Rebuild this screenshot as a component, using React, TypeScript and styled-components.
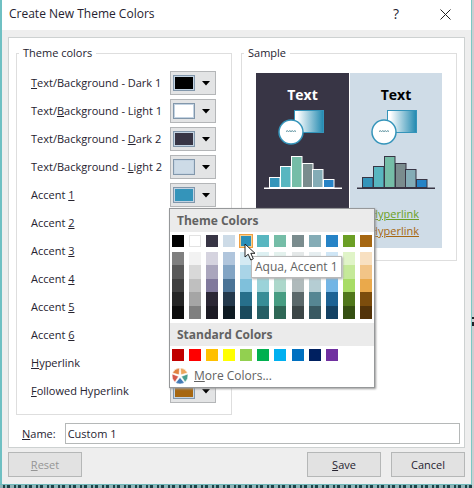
import React from "react";
import styled, { createGlobalStyle } from "styled-components";

const GlobalStyle = createGlobalStyle`
  * { box-sizing: border-box; }
  body {
    margin: 0;
    background: #cfcdd1;
    color: #262330;
    font: 11px/16px "Open Sans", "Noto Sans", sans-serif;
  }
  button, input { font: inherit; color: inherit; }
`;

const Desktop = styled.div`
  position: relative;
  min-height: 100vh;
  padding-right: 2px;
  display: flex;
  flex-direction: column;
  overflow: hidden;
`;

const Dialog = styled.section`
  border-left: 2px solid #6fc0c3;
  border-right: 1px solid #7cc8c4;
  background: #eeeeee;
`;

const DocumentEdge = styled.div`
  flex: 1;
  min-height: 3px;
  border-top: 1px solid #6fb9bb;
  background: repeating-linear-gradient(90deg, #8db4b7 0 3px, #1c4247 3px 5px, #86adb0 5px 7px, #1c4247 7px 10px, #8db4b7 10px 11px);
`;

const DocumentMark = styled.div`
  position: absolute;
  right: 0;
  top: 317px;
  width: 2px;
  height: 9px;
  border-top: 2px solid #242026;
  border-bottom: 4px solid #242026;
`;

const TitleBar = styled.header`
  height: 30px;
  padding: 0 20px 2px 7px;
  display: flex;
  align-items: center;
  background: #fff;
`;

const Title = styled.h1`
  flex: 1;
  margin: 0;
  font-size: 12px;
  line-height: 20px;
  font-weight: 400;
`;

const CaptionButton = styled.button`
  display: grid;
  place-items: center;
  width: 12px;
  height: 20px;
  margin-left: 37px;
  padding: 0;
  border: 0;
  background: none;
  font-size: 14px;
`;

const Panel = styled.div`
  margin: 7px 6px 4px;
  padding: 7px 7px 3px;
  border: 1px solid #cdd1d1;
  background: #fff;
`;

const Groups = styled.div`
  display: grid;
  grid-template-columns: 1fr 1fr;
  gap: 9px;
  align-items: start;
`;

const Group = styled.fieldset`
  min-width: 0;
  margin: 0;
  border: 1px solid #dedede;
  padding: 8px 15px 9px 14px;
`;

const Legend = styled.legend`
  margin-left: -12px;
  padding: 0 4px;
`;

const ColorRow = styled.div`
  display: flex;
  align-items: center;
  justify-content: space-between;
  height: 28px;
  white-space: nowrap;
`;

const PickerAnchor = styled.div`
  position: relative;
  height: 24px;
`;

const DropButton = styled.button`
  display: flex;
  align-items: center;
  justify-content: space-between;
  width: 46px;
  height: 24px;
  padding: 0 5px 0 2px;
  border: 1px solid #b4b6b8;
  background: #e3e4e5;
`;

const Chip = styled.span<{ $color: string }>`
  width: 22px;
  height: 16px;
  border: 1px solid #8297ab;
  padding: 1px;
  background: ${(p) => p.$color} content-box;
  box-shadow: inset 0 0 0 1px #c3d3e2;
`;

const Popup = styled.div`
  position: absolute;
  z-index: 2;
  left: -1px;
  top: 25px;
  width: 206px;
  border: 1px solid #96989a;
  background: #fff;
  box-shadow: 1px 1px 2px #9b9b9b;
  color: #626262;
`;

const PopupHeading = styled.h2`
  margin: 0;
  padding: 2px 7px 1px;
  background: #ebebeb;
  font-size: 12px;
  line-height: 20px;
  font-weight: 700;
`;

const SwatchRow = styled.div`
  display: grid;
  grid-template-columns: repeat(12, 12px);
  justify-content: space-between;
  padding: 3px 2px;
`;

const Swatch = styled.button<{ $color: string; $outlined?: boolean; $selected?: boolean }>`
  width: 12px;
  height: 12px;
  padding: 0;
  border: ${(p) => (p.$outlined ? "1px solid #e2e2e2" : "0")};
  background: ${(p) => p.$color};
  outline: ${(p) => (p.$selected ? "1px solid #f0a040" : "none")};
  box-shadow: ${(p) => (p.$selected ? "inset 0 0 0 1px #f6cf92" : "none")};
`;

const ShadeGrid = styled(SwatchRow)`
  padding: 2px 2px 4px;
`;

const ShadeColumn = styled.div`
  display: flex;
  flex-direction: column;
  height: 67px;
`;

const Shade = styled.button<{ $color: string }>`
  flex: 1;
  padding: 0;
  border: 0;
  background: ${(p) => p.$color};
`;

const MoreColors = styled.button`
  display: flex;
  align-items: center;
  gap: 6px;
  height: 23px;
  padding: 0 2px;
  border: 0;
  background: none;
  font-size: 12px;
`;

const Tooltip = styled.div`
  position: absolute;
  z-index: 3;
  left: 81px;
  top: 47px;
  padding: 0 3px;
  border: 1px solid #b9b9b9;
  background: #fff;
  box-shadow: 1px 1px 2px #aaa;
  font-size: 12px;
  line-height: 20px;
  white-space: nowrap;
`;

const Pointer = styled.svg`
  position: absolute;
  z-index: 4;
  left: 74px;
  top: 34px;
`;

const Preview = styled.div`
  display: grid;
  grid-template-columns: 1fr 1fr;
  height: 175px;
  margin: 4px -1px 3px 0;
`;

const Slide = styled.div<{ $dark?: boolean }>`
  display: flex;
  flex-direction: column;
  align-items: center;
  padding-top: 12px;
  background: ${(p) => (p.$dark ? "#383545" : "#cfdce7")};
  color: ${(p) => (p.$dark ? "#fff" : "#000")};
  border-left: ${(p) => (p.$dark ? "0" : "1px solid #fff")};
`;

const SlideTitle = styled.strong`
  font-size: 14px;
  line-height: 20px;
`;

const Drawing = styled.svg`
  display: block;
  flex: none;
  margin: 3px 0 15px;
`;

const SlideLink = styled.a<{ $color: string }>`
  align-self: flex-end;
  margin-right: 23px;
  line-height: 17px;
  color: ${(p) => p.$color};
`;

const NameRow = styled.div`
  display: flex;
  align-items: center;
  gap: 9px;
  margin: 8px -3px 0 6px;
`;

const NameInput = styled.input`
  flex: 1;
  min-width: 0;
  height: 21px;
  padding: 0 2px;
  border: 1px solid #b5b8b8;
  background: #fff;
`;

const Footer = styled.footer`
  display: flex;
  gap: 10px;
  padding: 0 6px 7px;
`;

const ActionButton = styled.button`
  width: 74px;
  height: 25px;
  padding: 0;
  border: 1px solid #b5b7b7;
  background: #e2e2e2;
  &:disabled { margin-right: auto; color: #959595; }
`;

type Entry = { pre?: string; key: string; post?: string; color: string };

const entries: Entry[] = [
  { key: "T", post: "ext/Background - Dark 1", color: "#000000" },
  { pre: "Text/", key: "B", post: "ackground - Light 1", color: "#ffffff" },
  { pre: "Text/Background - ", key: "D", post: "ark 2", color: "#383545" },
  { pre: "Text/Background - ", key: "L", post: "ight 2", color: "#cddbe7" },
  { pre: "Accent ", key: "1", color: "#3494ba" },
  { pre: "Accent ", key: "2", color: "#58b6c0" },
  { pre: "Accent ", key: "3", color: "#75bda7" },
  { pre: "Accent ", key: "4", color: "#7a8c8e" },
  { pre: "Accent ", key: "5", color: "#84acb6" },
  { pre: "Accent ", key: "6", color: "#2683c6" },
  { key: "H", post: "yperlink", color: "#6b9f25" },
  { key: "F", post: "ollowed Hyperlink", color: "#a66712" },
];

const themeColors = [
  "#000000", "#ffffff", "#383545", "#cddbe7", "#2c8fb9", "#58b6c0",
  "#75bda7", "#7a8c8e", "#84acb6", "#2683c6", "#6b9f25", "#a66712",
];

const shades = [
  ["#7f7f7f", "#595959", "#404040", "#262626", "#0d0d0d"],
  ["#f2f2f2", "#d8d8d8", "#bfbfbf", "#a5a5a5", "#7f7f7f"],
  ["#d5d3df", "#aaa6bd", "#80799c", "#2b2735", "#1c1a24"],
  ["#b0c5dc", "#82a4c4", "#4a7396", "#24394c", "#0e1a22"],
  ["#d4eaf3", "#a9d4e7", "#7fc0db", "#276f8b", "#1a4a5d"],
  ["#ddf0f2", "#bce1e5", "#9bd3d9", "#388d96", "#255e64"],
  ["#e3f1ed", "#c7e4dc", "#acd7ca", "#479d82", "#2f6856"],
  ["#e4e8e8", "#c9d1d2", "#afbabb", "#5b696b", "#3c4647"],
  ["#e6eef0", "#cddde1", "#b5cdd3", "#568693", "#395962"],
  ["#cfe6f6", "#a0cdef", "#72b5e5", "#1c6294", "#134163"],
  ["#e0f4c8", "#c5e999", "#a8dc65", "#50771b", "#354f12"],
  ["#f8e0c1", "#f2c487", "#eaa94b", "#7c4d0d", "#533309"],
];

const standardColors = [
  "#c00000", "#ff0000", "#ffc000", "#ffff00", "#92d050",
  "#00b050", "#00b0f0", "#0070c0", "#002060", "#7030a0",
];

const bars = [
  { x: 6, top: 22, color: "#3494ba" },
  { x: 17, top: 11, color: "#58b6c0" },
  { x: 28, top: 1, color: "#75bda7" },
  { x: 39, top: 8, color: "#7a8c8e" },
  { x: 49, top: 14, color: "#84acb6" },
  { x: 60, top: 24, color: "#2683c6" },
];

function Artwork({ id, stroke }: { id: string; stroke: string }) {
  return (
    <Drawing width="78" height="82" viewBox="0 0 78 82" aria-hidden="true">
      <defs>
        <linearGradient id={id}>
          <stop offset="0.1" stopColor="#fff" />
          <stop offset="1" stopColor="#2189b0" />
        </linearGradient>
      </defs>
      <rect x="30.5" y="2.5" width="29" height="22" fill={`url(#${id})`} stroke="#3494ba" />
      <circle cx="27" cy="24" r="12" fill="#fff" stroke="#3494ba" strokeWidth="1.5" />
      <path d="M22 23.5q1.300-1.500 2.500 0q1.300-1.500 2.500 0q1.300-1.500 2.500 0q1.300-1.500 2.500 0" fill="none" stroke="#4f8997" />
      <g transform="translate(0 47)" stroke={stroke}>
        {bars.map((b) => (
          <rect key={b.x} x={b.x - 0.5} y={b.top + 0.5} width="10.500" height={32 - b.top} fill={b.color} />
        ))}
        <path d="M0 33.200H78" strokeWidth="1.600" />
      </g>
    </Drawing>
  );
}

const wheel = [
  { color: "#eda55c", angle: 36 },
  { color: "#4a9e8f", angle: 108 },
  { color: "#4279b5", angle: 180 },
  { color: "#d45a4c", angle: 252 },
  { color: "#e0813f", angle: 324 },
];

function ColorWheel() {
  return (
    <svg width="16" height="16" viewBox="-8 -8 16 16" aria-hidden="true">
      {wheel.map((w) => (
        <path
          key={w.angle}
          d="M0-1.500L-4.300-6.800Q0-9.200 4.300-6.800Z"
          fill={w.color}
          stroke="#fff"
          strokeWidth="0.500"
          transform={`rotate(${w.angle})`}
        />
      ))}
    </svg>
  );
}

function ColorPopup() {
  return (
    <Popup>
      <PopupHeading>Theme Colors</PopupHeading>
      <SwatchRow>
        {themeColors.map((c, i) => (
          <Swatch key={c} $color={c} $outlined={i === 1} $selected={i === 4} aria-label={c} />
        ))}
      </SwatchRow>
      <ShadeGrid>
        {shades.map((column) => (
          <ShadeColumn key={column[0]}>
            {column.map((c) => <Shade key={c} $color={c} aria-label={c} />)}
          </ShadeColumn>
        ))}
      </ShadeGrid>
      <PopupHeading>Standard Colors</PopupHeading>
      <SwatchRow>
        {standardColors.map((c) => <Swatch key={c} $color={c} aria-label={c} />)}
      </SwatchRow>
      <MoreColors>
        <ColorWheel />
        <span><u>M</u>ore Colors...</span>
      </MoreColors>
      <Tooltip role="tooltip">Aqua, Accent 1</Tooltip>
      <Pointer width="13" height="19" viewBox="0 0 13 19" aria-hidden="true">
        <path d="M1 1V14L4.200 11.200L6.800 17L9.300 15.800L6.800 10.300H11Z" fill="#fff" stroke="#222" />
      </Pointer>
    </Popup>
  );
}

export default function App() {
  return (
    <Desktop>
      <GlobalStyle />
      <Dialog role="dialog" aria-labelledby="dialog-title">
        <TitleBar>
          <Title id="dialog-title">Create New Theme Colors</Title>
          <CaptionButton aria-label="Help">?</CaptionButton>
          <CaptionButton aria-label="Close">
            <svg width="11" height="11" viewBox="0 0 11 11" aria-hidden="true">
              <path d="M0.500 0.500L10.500 10.500M10.500 0.500L0.500 10.500" stroke="#222" />
            </svg>
          </CaptionButton>
        </TitleBar>
        <Panel>
          <Groups>
            <Group>
              <Legend>Theme colors</Legend>
              {entries.map((e, i) => (
                <ColorRow key={i}>
                  <label htmlFor={`color-${i}`}>{e.pre}<u>{e.key}</u>{e.post}</label>
                  <PickerAnchor>
                    <DropButton id={`color-${i}`} aria-haspopup="true">
                      <Chip $color={e.color} />
                      <svg width="8" height="5" viewBox="0 0 8 5" aria-hidden="true">
                        <path d="M0 0H8L4 4.500Z" fill="#000" />
                      </svg>
                    </DropButton>
                    {i === 4 && <ColorPopup />}
                  </PickerAnchor>
                </ColorRow>
              ))}
            </Group>
            <Group>
              <Legend>Sample</Legend>
              <Preview>
                <Slide $dark>
                  <SlideTitle>Text</SlideTitle>
                  <Artwork id="fill-dark" stroke="#ffffff" />
                </Slide>
                <Slide>
                  <SlideTitle>Text</SlideTitle>
                  <Artwork id="fill-light" stroke="#383545" />
                  <SlideLink href="#" $color="#6b9f25">Hyperlink</SlideLink>
                  <SlideLink href="#" $color="#a66712">Hyperlink</SlideLink>
                </Slide>
              </Preview>
            </Group>
          </Groups>
          <NameRow>
            <label htmlFor="theme-name"><u>N</u>ame:</label>
            <NameInput id="theme-name" defaultValue="Custom 1" />
          </NameRow>
        </Panel>
        <Footer>
          <ActionButton disabled><u>R</u>eset</ActionButton>
          <ActionButton><u>S</u>ave</ActionButton>
          <ActionButton>Cancel</ActionButton>
        </Footer>
      </Dialog>
      <DocumentEdge />
      <DocumentMark />
    </Desktop>
  );
}
